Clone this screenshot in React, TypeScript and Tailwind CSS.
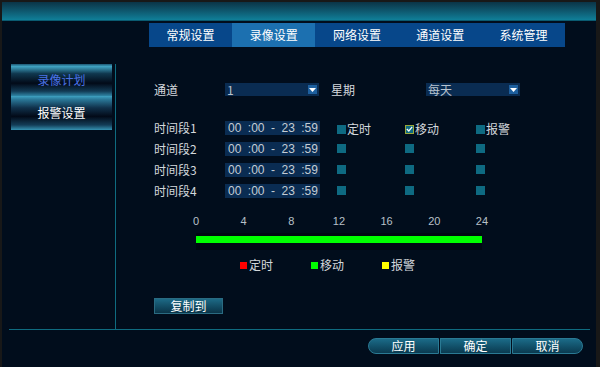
const font = { fontFamily: '"Noto Sans CJK SC", "Liberation Sans", sans-serif' }

const tabs = ['常规设置', '录像设置', '网络设置', '通道设置', '系统管理']
const hours = ['0', '4', '8', '12', '16', '20', '24']

function Dropdown({ value }: { value: string }) {
  return (
    <div className="w-[94px] h-[13px] bg-[#0a2c52] flex items-center justify-between pl-[2px] pr-[2px]">
      <span className="text-[12px] leading-none text-[#b9c3cd]">{value}</span>
      <span className="w-[9px] h-[9px] bg-[#1d5f9e] flex items-center justify-center">
        <svg width="7" height="4" viewBox="0 0 7 4">
          <path d="M0 0H7L3.5 4Z" fill="#ffffff" />
        </svg>
      </span>
    </div>
  )
}

function Check({ on, label }: { on?: boolean; label?: string }) {
  return (
    <div className="flex items-center gap-[1px]">
      <span
        className={
          'w-[9px] h-[9px] flex items-center justify-center ' +
          (on ? 'bg-[#0e6a82] border border-[#9aa83a]' : 'bg-[#0e6a82]')
        }
      >
        {on && (
          <svg width="7" height="6" viewBox="0 0 7 6">
            <path d="M0.8 3L2.8 5L6.2 0.8" stroke="#ffffff" strokeWidth="1.2" fill="none" />
          </svg>
        )}
      </span>
      {label && <span className="text-[12px] leading-none text-[#d4d8dc]">{label}</span>}
    </div>
  )
}

function TimeBox() {
  return (
    <div
      className="w-[95px] h-[14px] bg-[#0a2c52] flex items-center justify-between pl-[3px] pr-[2px] text-[12px] leading-none text-[#c4ccd4]"
      style={{ fontFamily: '"Liberation Sans", sans-serif' }}
    >
      <span>00</span>
      <span>:00</span>
      <span>-</span>
      <span>23</span>
      <span>:59</span>
    </div>
  )
}

export default function App() {
  return (
    <div className="w-[600px] h-[367px] bg-[#181818] pl-[2px] pt-[2px] pr-[4px] flex" style={font}>
      <div className="flex-1 flex flex-col bg-[#010d1c]">
        {/* title bar */}
        <div className="h-[19px] bg-gradient-to-b from-[#0a3447] to-[#0f7f99] border-b border-[#0a5a70]" />

        {/* tabs */}
        <div className="mt-[2px] ml-[147px] w-[416px] h-[24px] flex bg-[#07478a]">
          {tabs.map((t, i) => (
            <div
              key={t}
              className={
                'flex-1 flex items-center justify-center text-[12px] text-white ' +
                (i === 1 ? 'bg-[#1c70b0]' : '')
              }
            >
              {t}
            </div>
          ))}
        </div>

        {/* body */}
        <div className="mt-[17px] flex h-[265px]">
          <div className="w-[114px] pl-[9px] border-r border-[#0f6b80]">
            <div className="w-[101px] h-[32px] flex items-center justify-center text-[12px] text-[#4a72e6] bg-[linear-gradient(to_bottom,#1d5672_0%,#3fa2c2_8%,#10384f_30%,#020a18_60%,#123b55_85%,#2f86a6_100%)]">
              录像计划
            </div>
            <div className="w-[101px] h-[34px] flex items-center justify-center text-[12px] text-white bg-[linear-gradient(to_bottom,#3fa2c2_0%,#2a7898_10%,#10304a_35%,#020a18_60%,#133c56_85%,#3592b2_100%)]">
              报警设置
            </div>
          </div>

          <div className="flex-1 pl-[38px] text-[12px] text-[#d4d8dc]">
            {/* channel / week */}
            <div className="mt-[19px] flex items-center h-[13px]">
              <span className="w-[71px]">通道</span>
              <Dropdown value="1" />
              <span className="ml-[12px] w-[95px]">星期</span>
              <Dropdown value="每天" />
            </div>

            {/* time segments */}
            <div className="mt-[25px] flex flex-col">
              {[1, 2, 3, 4].map((n) => (
                <div key={n} className="h-[21px] flex items-start">
                  <span className="w-[71px] leading-[14px]">时间段{n}</span>
                  <TimeBox />
                  <div className="ml-[17px] mt-[2px] w-[68px]"><Check label={n === 1 ? '定时' : undefined} /></div>
                  <div className="w-[71px] mt-[2px]"><Check on={n === 1} label={n === 1 ? '移动' : undefined} /></div>
                  <div className="mt-[2px]"><Check label={n === 1 ? '报警' : undefined} /></div>
                </div>
              ))}
            </div>

            {/* 24h scale */}
            <div className="mt-[11px] ml-[42px] w-[286px] flex justify-between text-[11px] leading-none text-[#b8c0c8]" style={{ fontFamily: '"Liberation Sans", sans-serif' }}>
              {hours.map((h) => (
                <span key={h} className="w-0 flex justify-center">{h}</span>
              ))}
            </div>
            <div className="mt-[6px] ml-[42px] w-[286px] h-[17px] bg-[#000812] pt-[3px]">
              <div className="h-[7px] bg-[#00ff00]" />
            </div>

            {/* legend */}
            <div className="mt-[6px] ml-[86px] flex items-center">
              <span className="w-[7px] h-[7px] bg-[#ff0000]" />
              <span className="ml-[2px] w-[62px]">定时</span>
              <span className="w-[7px] h-[7px] bg-[#00ff00]" />
              <span className="ml-[2px] w-[62px]">移动</span>
              <span className="w-[7px] h-[7px] bg-[#ffff00]" />
              <span className="ml-[2px]">报警</span>
            </div>

            <div className="mt-[24px] w-[69px] h-[16px] flex items-center justify-center text-[12px] text-white border border-[#2a6b82] bg-gradient-to-b from-[#1d6a86] to-[#0a3448]">
              复制到
            </div>
          </div>
        </div>

        {/* bottom rule */}
        <div className="ml-[7px] mr-[6px] border-t border-[#0f6b80]" />

        {/* action buttons */}
        <div className="mt-[8px] ml-[366px] flex gap-[1px]">
          {['应用', '确定', '取消'].map((b, i) => (
            <div
              key={b}
              className={
                'w-[71px] h-[16px] flex items-center justify-center text-[12px] text-white border border-[#2a7a94] bg-gradient-to-b from-[#1b6b88] to-[#0a3a50] ' +
                (i === 0 ? 'rounded-l-full' : i === 2 ? 'rounded-r-full' : '')
              }
            >
              {b}
            </div>
          ))}
        </div>
      </div>
    </div>
  )
}
